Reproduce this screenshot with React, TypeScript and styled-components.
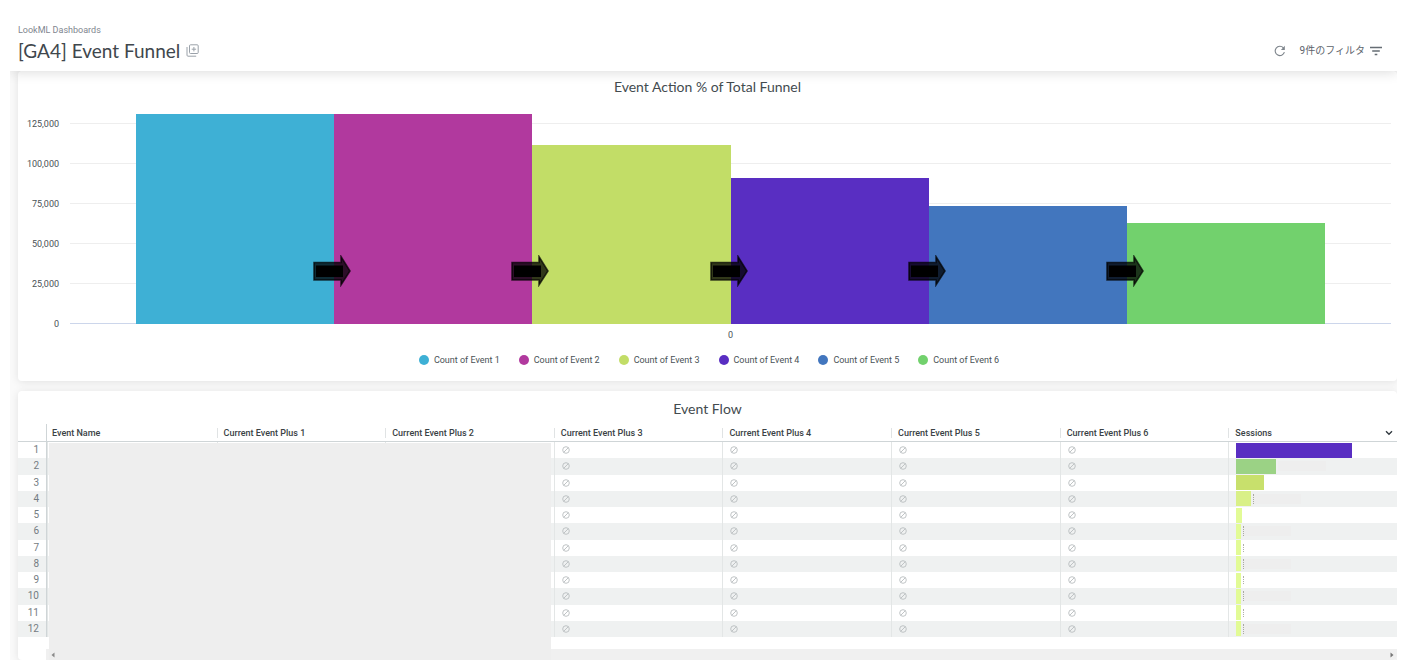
import React from "react";
import styled, { createGlobalStyle } from "styled-components";

const GlobalStyle = createGlobalStyle`
  *, *::before, *::after { box-sizing: border-box; }
  body {
    margin: 0;
    background: #ffffff;
    color: #4a5256;
    font-family: Roboto, "Liberation Sans", "Noto Sans CJK JP", sans-serif;
    font-size: 9px;
    line-height: 12px;
  }
`;

const Page = styled.div`
  margin: 0 18px 2px 10px;
  overflow: hidden;
`;

const Header = styled.header`
  position: relative;
  z-index: 1;
  display: flex;
  justify-content: space-between;
  align-items: flex-end;
  padding: 24px 15px 9px 8px;
  background: #ffffff;
  box-shadow: 0 1px 12px rgba(0, 0, 0, 0.15);
`;

const Crumb = styled.a`
  display: block;
  color: #80868f;
  text-decoration: none;
`;

const TitleRow = styled.div`
  display: flex;
  align-items: center;
  gap: 6px;
  margin-top: 3px;
`;

const PageTitle = styled.h1`
  margin: 0;
  font-family: Lato, sans-serif;
  font-size: 19px;
  font-weight: 400;
  line-height: 23px;
  color: #3f474d;
`;

const Actions = styled.div`
  display: flex;
  align-items: center;
  gap: 14px;
  height: 23px;
`;

const PlainButton = styled.button`
  display: flex;
  align-items: center;
  gap: 5px;
  padding: 0;
  border: 0;
  background: none;
  color: #5c636b;
  font-family: Roboto, "Noto Sans CJK JP", sans-serif;
  font-size: 10px;
  font-weight: 400;
  line-height: 14px;
`;

const Board = styled.main`
  display: flex;
  flex-direction: column;
  gap: 10px;
  padding-left: 8px;
  background: #fafafa;
`;

const Card = styled.section`
  position: relative;
  background: #ffffff;
  border-radius: 4px;
  box-shadow: 0 1px 8px rgba(0, 0, 0, 0.1);
`;

const CardTitle = styled.h2`
  margin: 0;
  font-family: Lato, sans-serif;
  font-size: 14px;
  font-weight: 400;
  line-height: 18px;
  text-align: center;
  color: #434b4f;
`;

const ChartCard = styled(Card)`
  padding: 7px 0 15px;
`;

const Chart = styled.div`
  display: grid;
  grid-template-columns: 41px 1fr;
  column-gap: 11px;
  margin: 8px 6px 0 0;
`;

const YAxis = styled.div`
  display: flex;
  flex-direction: column;
  height: 220px;
  text-align: right;
  line-height: 40px;
`;

const TickLabel = styled.span`
  flex: none;
  height: 40px;
`;

const Plot = styled.div`
  display: grid;
  height: 220px;

  & > * {
    grid-area: 1 / 1;
  }
`;

const GridLines = styled.div`
  display: flex;
  flex-direction: column;
  justify-content: flex-end;
  border-bottom: 1px solid #ccd6eb;
`;

const GridLine = styled.div`
  height: 40px;
  border-top: 1px solid #eeeeee;
`;

const Bars = styled.div`
  display: flex;
  align-items: flex-end;
  padding: 0 5%;
`;

const Bar = styled.div<{ $color: string }>`
  position: relative;
  flex: 1;
  background: ${(p) => p.$color};
`;

const Arrow = styled.svg`
  position: absolute;
  z-index: 1;
  right: -17px;
  bottom: 37px;
`;

const XLabel = styled.div`
  grid-column: 2;
  margin-top: 5px;
  text-align: center;
`;

const Legend = styled.ul`
  display: flex;
  justify-content: center;
  gap: 19px;
  margin: 13px 0 0 3px;
  padding: 0;
  list-style: none;
`;

const LegendItem = styled.li<{ $color: string }>`
  display: flex;
  align-items: center;
  gap: 5px;

  &::before {
    content: "";
    width: 10px;
    height: 10px;
    border-radius: 50%;
    background: ${(p) => p.$color};
  }
`;

const TableCard = styled(Card)`
  padding-top: 9px;
  overflow: hidden;
`;

const Table = styled.table`
  width: 100%;
  height: 213px;
  margin-top: 6px;
  table-layout: fixed;
  border-collapse: separate;
  border-spacing: 0;

  th,
  td {
    padding: 0;
  }
`;

const HeadCell = styled.th<{ $index?: boolean }>`
  height: 18px;
  border-bottom: 1px solid #cfd5d7;
  border-right: ${(p) => (p.$index ? "1px solid #cfd5d7" : "0")};
  text-align: left;
  font-weight: 500;
  color: #3a4245;
`;

const HeadLabel = styled.div<{ $divided?: boolean }>`
  display: flex;
  align-items: center;
  justify-content: space-between;
  height: 10px;
  padding: 0 4px 0 ${(p) => (p.$divided ? 6 : 5)}px;
  border-left: ${(p) => (p.$divided ? "1px solid #e0e3e4" : "0")};
`;

const Row = styled.tr<{ $striped: boolean }>`
  height: 16px;
  background: ${(p) => (p.$striped ? "#eff1f1" : "#ffffff")};
`;

const IndexCell = styled.td`
  border-right: 1px solid #cfd5d7;
  text-align: right;
  color: #747c82;
  font-size: 10px;

  && {
    padding-right: 7px;
  }
`;

const Cell = styled.td`
  border-left: 1px solid #e3e6e6;

  && {
    padding-left: 7px;
  }

  svg {
    display: block;
  }
`;

const Meter = styled.div`
  display: flex;
  align-items: center;
  gap: 2px;
`;

const MeterBar = styled.div<{ $color: string }>`
  height: 15px;
  background: ${(p) => p.$color};
`;

const MeterMask = styled.div<{ $mark: boolean }>`
  width: 48px;
  height: 10px;
  background: #eeeeee;
  border-left: ${(p) => (p.$mark ? "1px dotted #a9a9a0" : "0")};
`;

const Remnant = styled.div`
  height: 8px;
  border-left: 1px dotted #b0b0a8;
`;

const Redaction = styled.div`
  position: absolute;
  top: 52px;
  bottom: 0;
  left: 31px;
  width: calc(36% + 6px);
  background: #eeeeee;
`;

const ScrollTrack = styled.div`
  display: flex;
  align-items: center;
  justify-content: space-between;
  height: 11px;
  margin: 12px 0 0 28px;
  padding: 0 3px 0 5px;
  background: #f0f0f0;

  svg {
    position: relative;
    z-index: 1;
  }
`;

const SCALE_STEP = 25000;
const STEP_HEIGHT = 40;

const series = [
  { name: "Count of Event 1", value: 131000, color: "#3eb0d5" },
  { name: "Count of Event 2", value: 131000, color: "#b1399e" },
  { name: "Count of Event 3", value: 111800, color: "#c2dd67" },
  { name: "Count of Event 4", value: 91000, color: "#592ec2" },
  { name: "Count of Event 5", value: 73700, color: "#4276be" },
  { name: "Count of Event 6", value: 63000, color: "#72d16d" },
];

const ticks = ["125,000", "100,000", "75,000", "50,000", "25,000", "0"];

const columns = [
  "Event Name",
  "Current Event Plus 1",
  "Current Event Plus 2",
  "Current Event Plus 3",
  "Current Event Plus 4",
  "Current Event Plus 5",
  "Current Event Plus 6",
];

const sessions = [
  { width: 116, color: "#592ec2" },
  { width: 40, color: "#9bd285" },
  { width: 28, color: "#c8e06c" },
  { width: 15, color: "#d9f087" },
  { width: 6, color: "#e2fb96" },
  { width: 5, color: "#e2fb96" },
  { width: 5, color: "#e2fb96" },
  { width: 5, color: "#e2fb96" },
  { width: 5, color: "#e2fb96" },
  { width: 5, color: "#e2fb96" },
  { width: 5, color: "#e2fb96" },
  { width: 5, color: "#e2fb96" },
];

const CopyIcon = () => (
  <svg width="13" height="13" viewBox="0 0 13 13" fill="none" stroke="#9aa1a9">
    <rect x="3.5" y="0.8" width="8.7" height="8.7" rx="1" />
    <path d="M1 3v8.2q0 1 1 1h8.2M7.9 3v4.4M5.7 5.2h4.4" />
  </svg>
);

const RefreshIcon = () => (
  <svg width="12" height="12" viewBox="0 0 12 12" fill="none" stroke="#7d848b" strokeWidth="1.1">
    <path d="M10.4 7.2A4.7 4.7 0 1 1 9.4 2.8" />
    <path d="M10.8 0.8v4.1H6.9z" fill="#7d848b" stroke="none" />
  </svg>
);

const FilterIcon = () => (
  <svg width="12" height="10" viewBox="0 0 12 10" stroke="#666d74" strokeWidth="1.3">
    <path d="M0 1.5h12M2.2 5h7.6M4.7 8.5h2.6" />
  </svg>
);

const NullIcon = () => (
  <svg width="8" height="8" viewBox="0 0 8 8" fill="none" stroke="#b9bdbf" strokeWidth="0.9" role="img" aria-label="null">
    <circle cx="4" cy="4" r="3.3" />
    <path d="M1.8 6.2L6.2 1.8" />
  </svg>
);

const StepArrow = () => (
  <Arrow width="38" height="32" viewBox="0 0 38 32">
    <path
      d="M1 7.5H28V1.5L37 16L28 30V25H1z"
      fill="#000"
      fillOpacity="0.75"
      stroke="#000"
      strokeOpacity="0.7"
      strokeWidth="1.6"
    />
    <path d="M3 10.5H30V22H3z" fill="#000" />
  </Arrow>
);

export default function App() {
  return (
    <>
      <GlobalStyle />
      <Page>
        <Header>
          <div>
            <Crumb href="#dashboards">LookML Dashboards</Crumb>
            <TitleRow>
              <PageTitle>[GA4] Event Funnel</PageTitle>
              <PlainButton aria-label="Copy dashboard">
                <CopyIcon />
              </PlainButton>
            </TitleRow>
          </div>
          <Actions>
            <PlainButton aria-label="Refresh">
              <RefreshIcon />
            </PlainButton>
            <PlainButton>
              9件のフィルタ
              <FilterIcon />
            </PlainButton>
          </Actions>
        </Header>
        <Board>
          <ChartCard>
            <CardTitle>Event Action % of Total Funnel</CardTitle>
            <Chart>
              <YAxis>
                {ticks.map((tick) => (
                  <TickLabel key={tick}>{tick}</TickLabel>
                ))}
              </YAxis>
              <Plot>
                <GridLines>
                  {ticks.slice(1).map((tick) => (
                    <GridLine key={tick} />
                  ))}
                </GridLines>
                <Bars>
                  {series.map((s, i) => (
                    <Bar
                      key={s.name}
                      $color={s.color}
                      style={{ height: Math.round((s.value / SCALE_STEP) * STEP_HEIGHT) }}
                    >
                      {i < series.length - 1 && <StepArrow />}
                    </Bar>
                  ))}
                </Bars>
              </Plot>
              <XLabel>0</XLabel>
            </Chart>
            <Legend>
              {series.map((s) => (
                <LegendItem key={s.name} $color={s.color}>
                  {s.name}
                </LegendItem>
              ))}
            </Legend>
          </ChartCard>
          <TableCard>
            <CardTitle>Event Flow</CardTitle>
            <Table>
              <colgroup>
                <col style={{ width: 29 }} />
                <col style={{ width: "12.3%" }} />
              </colgroup>
              <thead>
                <tr>
                  <HeadCell $index aria-label="Row" />
                  {columns.map((c, i) => (
                    <HeadCell key={c}>
                      <HeadLabel $divided={i > 0}>{c}</HeadLabel>
                    </HeadCell>
                  ))}
                  <HeadCell>
                    <HeadLabel $divided>
                      Sessions
                      <svg width="8" height="6" viewBox="0 0 8 6" fill="none" stroke="#343c42" strokeWidth="1.4">
                        <path d="M1 1.2l3 3 3-3" />
                      </svg>
                    </HeadLabel>
                  </HeadCell>
                </tr>
              </thead>
              <tbody>
                {sessions.map((s, i) => (
                  <Row key={i} $striped={i % 2 === 1}>
                    <IndexCell>{i + 1}</IndexCell>
                    {columns.map((c, n) => (
                      <Cell key={c}>{n > 2 && <NullIcon />}</Cell>
                    ))}
                    <Cell>
                      <Meter>
                        <MeterBar $color={s.color} style={{ width: s.width }} />
                        {i % 2 === 1 && <MeterMask $mark={i > 2} />}
                        {i % 2 === 0 && i > 5 && <Remnant />}
                      </Meter>
                    </Cell>
                  </Row>
                ))}
              </tbody>
            </Table>
            <Redaction />
            <ScrollTrack>
              <svg width="4" height="6" viewBox="0 0 4 6" fill="#8a8a8a">
                <path d="M3.5 0.5v5L0.5 3z" />
              </svg>
              <svg width="4" height="6" viewBox="0 0 4 6" fill="#777">
                <path d="M0.5 0.5v5L3.5 3z" />
              </svg>
            </ScrollTrack>
          </TableCard>
        </Board>
      </Page>
    </>
  );
}
